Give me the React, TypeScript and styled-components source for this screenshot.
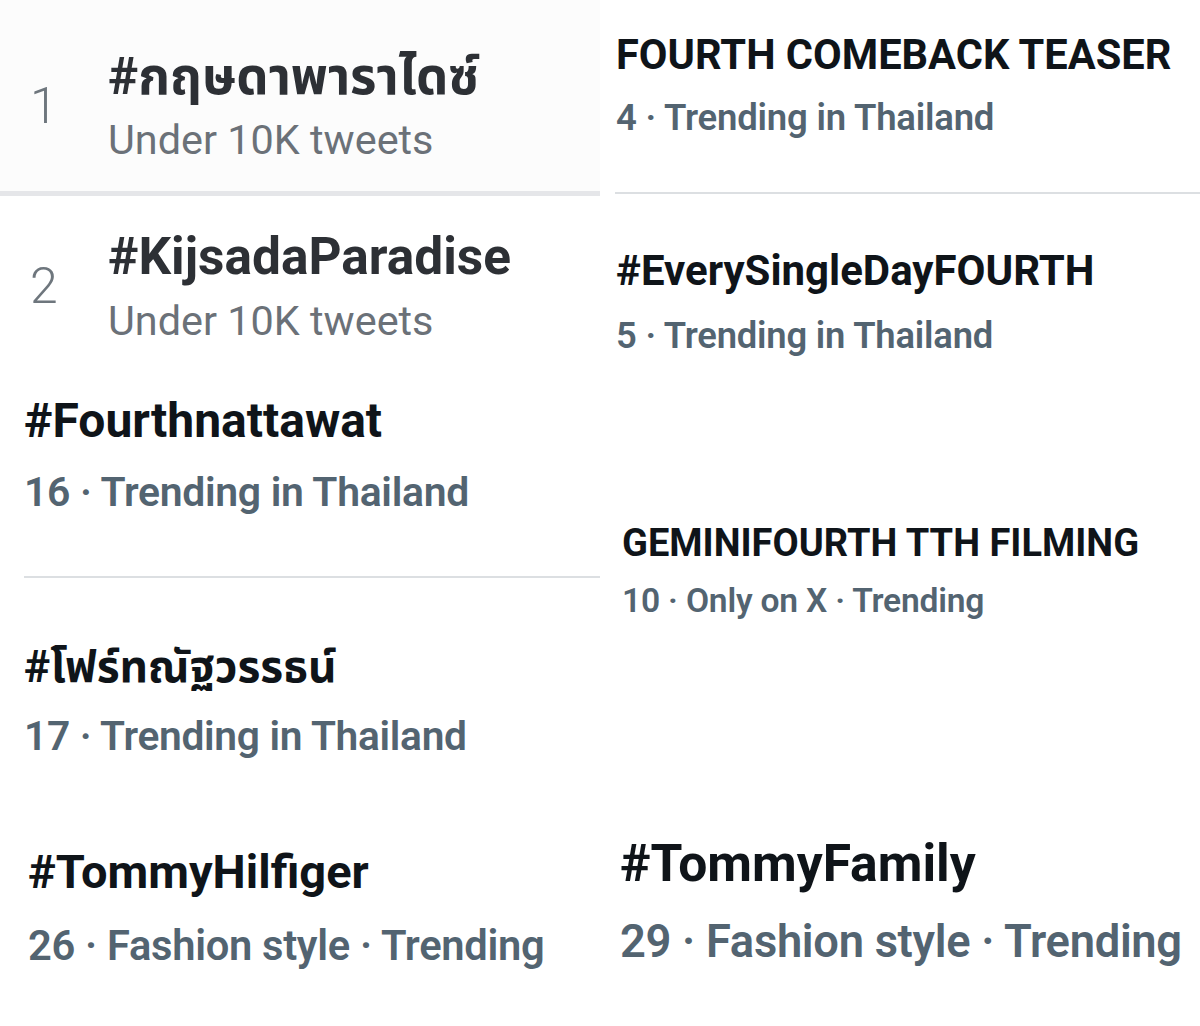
import React from "react";
import styled, { createGlobalStyle } from "styled-components";

const ink = "#0f1419";
const inkSoft = "#2d3035";
const meta = "#536471";
const metaSoft = "#6b7178";
const rule = "#dcdfe2";
const band = "#e5e6e9";

const Global = createGlobalStyle`
  html, body { margin: 0; padding: 0; background: #ffffff; }
  body {
    font-family: Roboto, "Noto Sans Thai", "Noto Sans", "DejaVu Sans", sans-serif;
    -webkit-font-smoothing: antialiased;
  }
`;

const Page = styled.div`
  width: 1200px;
  height: 1026px;
  display: grid;
  grid-template-columns: 600px 600px;
  overflow: hidden;
  background: #ffffff;
`;

const Column = styled.div`
  display: flex;
  flex-direction: column;
`;

/* Один блок тренда: высота, отступы и нижняя линия задаются пропсами */
const Block = styled.div<{
  $h: number;
  $pt: number;
  $pl: number;
  $bg?: string;
  $band?: boolean;
  $rule?: number;
}>`
  box-sizing: border-box;
  height: ${({ $h }) => $h}px;
  padding-top: ${({ $pt }) => $pt}px;
  padding-left: ${({ $pl }) => $pl}px;
  background: ${({ $bg }) => $bg || "transparent"};
  display: flex;
  flex-direction: row;
  flex-shrink: 0;
  position: relative;
  ${({ $band }) => $band && `border-bottom: 5px solid ${band};`}
  ${({ $rule }) =>
    $rule !== undefined &&
    `&::after {
      content: "";
      position: absolute;
      left: ${$rule}px;
      right: 0;
      bottom: 0;
      height: 2px;
      background: ${rule};
    }`}
`;

const Rank = styled.div<{ $top: number }>`
  width: 78px;
  padding-left: 30px;
  margin-top: ${({ $top }) => $top}px;
  font-size: 50px;
  line-height: 1.2;
  font-weight: 300;
  color: #6e767d;
  flex-shrink: 0;
`;

const Body = styled.div`
  display: flex;
  flex-direction: column;
`;

const Title = styled.div<{ $size: number; $soft?: boolean; $ls?: number }>`
  font-size: ${({ $size }) => $size}px;
  line-height: 1.2;
  font-weight: 700;
  color: ${({ $soft }) => ($soft ? inkSoft : ink)};
  letter-spacing: ${({ $ls }) => $ls ?? 0}px;
  white-space: nowrap;
`;

const Meta = styled.div<{ $size: number; $gap: number; $soft?: boolean; $ls?: number }>`
  font-size: ${({ $size }) => $size}px;
  line-height: 1.2;
  margin-top: ${({ $gap }) => $gap}px;
  font-weight: ${({ $soft }) => ($soft ? 400 : 600)};
  color: ${({ $soft }) => ($soft ? metaSoft : meta)};
  letter-spacing: ${({ $ls }) => $ls ?? 0}px;
  white-space: nowrap;
`;

type Trend = {
  title: string;
  meta: string;
  h: number;
  pt: number;
  pl: number;
  ts: number;
  ms: number;
  gap: number;
  rank?: string;
  rankTop?: number;
  soft?: boolean;
  bg?: string;
  band?: boolean;
  rule?: number;
  tls?: number;
  mls?: number;
};

const left: Trend[] = [
  {
    rank: "1",
    rankTop: 30,
    title: "#กฤษดาพาราไดซ์",
    meta: "Under 10K tweets",
    h: 196,
    pt: 46,
    pl: 0,
    ts: 51,
    ms: 41.4,
    gap: 9,
    soft: true,
    bg: "#fcfcfc",
    band: true,
  },
  {
    rank: "2",
    rankTop: 30,
    title: "#KijsadaParadise",
    meta: "Under 10K tweets",
    h: 179,
    pt: 30,
    pl: 0,
    ts: 51.4,
    ms: 41.4,
    gap: 9,
    soft: true,
  },
  {
    title: "#Fourthnattawat",
    meta: "16 · Trending in Thailand",
    h: 203,
    pt: 17,
    pl: 24,
    ts: 48,
    ms: 40.9,
    gap: 18,
    rule: 24,
    mls: -0.3,
  },
  {
    title: "#โฟร์ทณัฐวรรธน์",
    meta: "17 · Trending in Thailand",
    h: 222,
    pt: 63,
    pl: 24,
    ts: 44.2,
    ms: 40.7,
    gap: 18,
    mls: -0.3,
  },
  {
    title: "#TommyHilfiger",
    meta: "26 · Fashion style · Trending",
    h: 226,
    pt: 44,
    pl: 28,
    ts: 47,
    ms: 41.7,
    gap: 21,
    mls: -0.3,
  },
];

const right: Trend[] = [
  {
    title: "FOURTH COMEBACK TEASER",
    meta: "4 · Trending in Thailand",
    h: 194,
    pt: 30,
    pl: 16,
    ts: 41.6,
    ms: 36.5,
    gap: 16,
    rule: 15,
    mls: -0.2,
  },
  {
    title: "#EverySingleDayFOURTH",
    meta: "5 · Trending in Thailand",
    h: 266,
    pt: 52,
    pl: 16,
    ts: 42,
    ms: 36.4,
    gap: 18,
    mls: -0.2,
  },
  {
    title: "GEMINIFOURTH TTH FILMING",
    meta: "10 · Only on X · Trending",
    h: 320,
    pt: 61,
    pl: 22,
    ts: 38,
    ms: 33.6,
    gap: 14,
    mls: -0.2,
  },
  {
    title: "#TommyFamily",
    meta: "29 · Fashion style · Trending",
    h: 246,
    pt: 53,
    pl: 20,
    ts: 51.6,
    ms: 45.3,
    gap: 20,
    mls: -0.3,
  },
];

function TrendItem({ t }: { t: Trend }) {
  return (
    <Block $h={t.h} $pt={t.pt} $pl={t.pl} $bg={t.bg} $band={t.band} $rule={t.rule}>
      {t.rank && <Rank $top={t.rankTop ?? 0}>{t.rank}</Rank>}
      <Body>
        <Title $size={t.ts} $soft={t.soft} $ls={t.tls}>
          {t.title}
        </Title>
        <Meta $size={t.ms} $gap={t.gap} $soft={t.soft} $ls={t.mls}>
          {t.meta}
        </Meta>
      </Body>
    </Block>
  );
}

export default function App() {
  return (
    <>
      <Global />
      <Page>
        <Column>
          {left.map((t) => (
            <TrendItem key={t.title} t={t} />
          ))}
        </Column>
        <Column>
          {right.map((t) => (
            <TrendItem key={t.title} t={t} />
          ))}
        </Column>
      </Page>
    </>
  );
}
